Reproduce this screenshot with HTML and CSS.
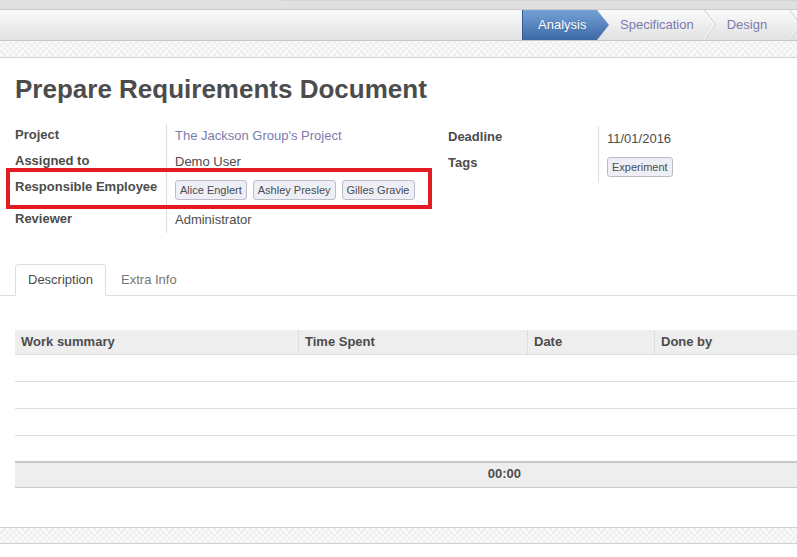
FILE: index.html
```html
<!DOCTYPE html>
<html>
<head>
<meta charset="utf-8">
<link rel="stylesheet" href="styles.css">
</head>
<body>
<div class="topbar"><div class="topbar-edge"></div></div>
<div class="statusbar">
  <div class="step step-active">Analysis</div>
  <div class="step">Specification</div>
  <svg class="chev" width="12" height="30" viewBox="0 0 12 30"><polyline points="0.5,0 11.5,15 0.5,30" fill="none" stroke="#d2d2d2" stroke-width="1.2"/><polyline points="-0.5,0 10.5,15 -0.5,30" fill="none" stroke="#fafafa" stroke-width="1"/></svg>
  <div class="step step-last">Design</div>
  <svg class="chev" width="12" height="30" viewBox="0 0 12 30"><polyline points="0.5,0 11.5,15 0.5,30" fill="none" stroke="#d2d2d2" stroke-width="1.2"/><polyline points="-0.5,0 10.5,15 -0.5,30" fill="none" stroke="#fafafa" stroke-width="1"/></svg>
</div>
<div class="checker checker-top"></div>
<div class="sheet">
  <h1 class="title">Prepare Requirements Document</h1>
  <div class="groups">
    <div class="group group-left">
      <div class="label">Project</div>
      <div class="value"><span class="link">The Jackson Group's Project</span></div>
      <div class="label">Assigned to</div>
      <div class="value">Demo User</div>
      <div class="label">Responsible Employee</div>
      <div class="value value-tags">
        <span class="tag">Alice Englert</span>
        <span class="tag">Ashley Presley</span>
        <span class="tag">Gilles Gravie</span>
      </div>
      <div class="label">Reviewer</div>
      <div class="value">Administrator</div>
      <div class="highlight"></div>
    </div>
    <div class="group group-right">
      <div class="label">Deadline</div>
      <div class="value value-date">11/01/2016</div>
      <div class="label">Tags</div>
      <div class="value value-tags"><span class="tag">Experiment</span></div>
    </div>
  </div>
  <div class="tabs">
    <div class="tab tab-active">Description</div>
    <div class="tab">Extra Info</div>
  </div>
  <div class="list">
    <div class="list-row list-head">
      <div class="cell">Work summary</div>
      <div class="cell">Time Spent</div>
      <div class="cell">Date</div>
      <div class="cell">Done by</div>
    </div>
    <div class="list-row list-empty"></div>
    <div class="list-row list-empty"></div>
    <div class="list-row list-empty"></div>
    <div class="list-row list-empty list-empty-last"></div>
    <div class="list-row list-foot">
      <div class="cell"></div>
      <div class="cell cell-total">00:00</div>
      <div class="cell"></div>
      <div class="cell"></div>
    </div>
  </div>
</div>
<div class="checker checker-bottom"></div>
</body>
</html>
```

FILE: styles.css
```css
* { box-sizing: border-box; }
html, body { margin: 0; padding: 0; background: #fff; }
body {
  font-family: "Liberation Sans", Arial, sans-serif;
  font-size: 13px;
  line-height: 18px;
  color: #4c4c4c;
  overflow: hidden;
}

.topbar {
  height: 10px;
  background: #e0e0e0;
  border-bottom: 1px solid #c9c9c9;
}
.topbar-edge {
  margin-left: 282px;
  height: 1px;
  background: #d4d4d4;
}

.statusbar {
  height: 31px;
  display: flex;
  align-items: stretch;
  padding-left: 522px;
  background: linear-gradient(#fbfbfb, #e1e1e1);
  border-bottom: 1px solid #c8c8c8;
  overflow: hidden;
  white-space: nowrap;
}
.step {
  flex: none;
  line-height: 30px;
  color: #7c7bad;
  padding: 0 10px 0 11px;
}
.step-last { padding-right: 22px; }
.step-active {
  width: 87px;
  padding: 0 0 0 15px;
  color: #fff;
  text-shadow: 0 0 1px rgba(0,0,0,0.25);
  background: linear-gradient(#74a2d6, #3d69a8);
  clip-path: polygon(0 0, 75px 0, 87px 50%, 75px 100%, 0 100%);
  border-left: 1px solid #2f5a93;
}
.chev { flex: none; display: block; }

.checker {
  height: 17px;
  background-color: #fafafa;
  background-image: repeating-conic-gradient(#efefef 0 25%, #fafafa 0 50%);
  background-size: 6px 6px;
}
.checker-top { border-bottom: 1px solid #d2d2da; }
.checker-bottom {
  border-top: 1px solid #cfcfd6;
  border-bottom: 1px solid #cfcfd6;
}

.sheet {
  height: 469px;
  padding-top: 16px;
  background: #fff;
}
.title {
  margin: 0 0 0 15px;
  font-size: 26px;
  line-height: 30px;
  font-weight: bold;
  color: #4c4c4c;
}

.groups {
  display: flex;
  margin-top: 20px;
  padding-left: 15px;
}
.group {
  display: grid;
  grid-template-columns: 151px 1fr;
}
.group-left {
  position: relative;
  width: 433px;
  grid-template-rows: 26px 26px 32px 25px;
}
.group-right {
  flex: 1;
  margin-top: 2px;
  grid-template-columns: 150px 1fr;
  grid-template-rows: 26px 31px;
}
.label {
  font-weight: bold;
  padding-top: 2px;
}
.value {
  border-left: 1px solid #dddddd;
  padding: 3px 0 0 8px;
}
.value-date { padding-top: 4px; }
.value-tags {
  display: flex;
  align-items: flex-start;
  gap: 6px;
  padding-top: 4px;
}
.group-right .value-tags { padding-top: 5px; }
.link { color: #7c7bad; }
.tag {
  display: inline-block;
  height: 20px;
  padding: 0 4px;
  font-size: 11px;
  line-height: 18px;
  border: 1px solid #bdbdc9;
  border-radius: 3px;
  background: #eeeef7;
  color: #4c4c4c;
}
.highlight {
  position: absolute;
  left: -9px;
  top: 44px;
  width: 426px;
  height: 41px;
  border: 4px solid #e31b23;
  pointer-events: none;
}

.tabs {
  display: flex;
  margin-top: 31px;
  padding-left: 15px;
  border-bottom: 1px solid #dddddd;
}
.tab {
  margin-right: 2px;
  margin-bottom: -1px;
  padding: 6px 12px 6px;
  border: 1px solid transparent;
  border-radius: 4px 4px 0 0;
  color: #777;
}
.tab-active {
  color: #4c4c4c;
  border-color: #dddddd #dddddd #fff;
  background: #fff;
}

.list {
  margin: 34px 0 0 15px;
}
.list-row {
  display: grid;
  grid-template-columns: 283px 229px 127px 1fr;
}
.list-head {
  height: 25px;
  background: #eeeeee;
  border-bottom: 1px solid #dddddd;
  font-weight: bold;
}
.cell {
  padding: 3px 6px 0;
  white-space: nowrap;
}
.list-head .cell + .cell { border-left: 1px solid #dddddd; }
.list-empty {
  height: 27px;
  border-bottom: 1px solid #dddddd;
}
.list-empty-last {
  height: 25px;
  border-bottom: none;
}
.list-foot {
  height: 27px;
  background: #eeeeee;
  border-top: 2px solid #c8c8c8;
  border-bottom: 1px solid #c8c8c8;
  font-weight: bold;
}
.cell-total {
  text-align: right;
  padding-top: 2px;
}
```
